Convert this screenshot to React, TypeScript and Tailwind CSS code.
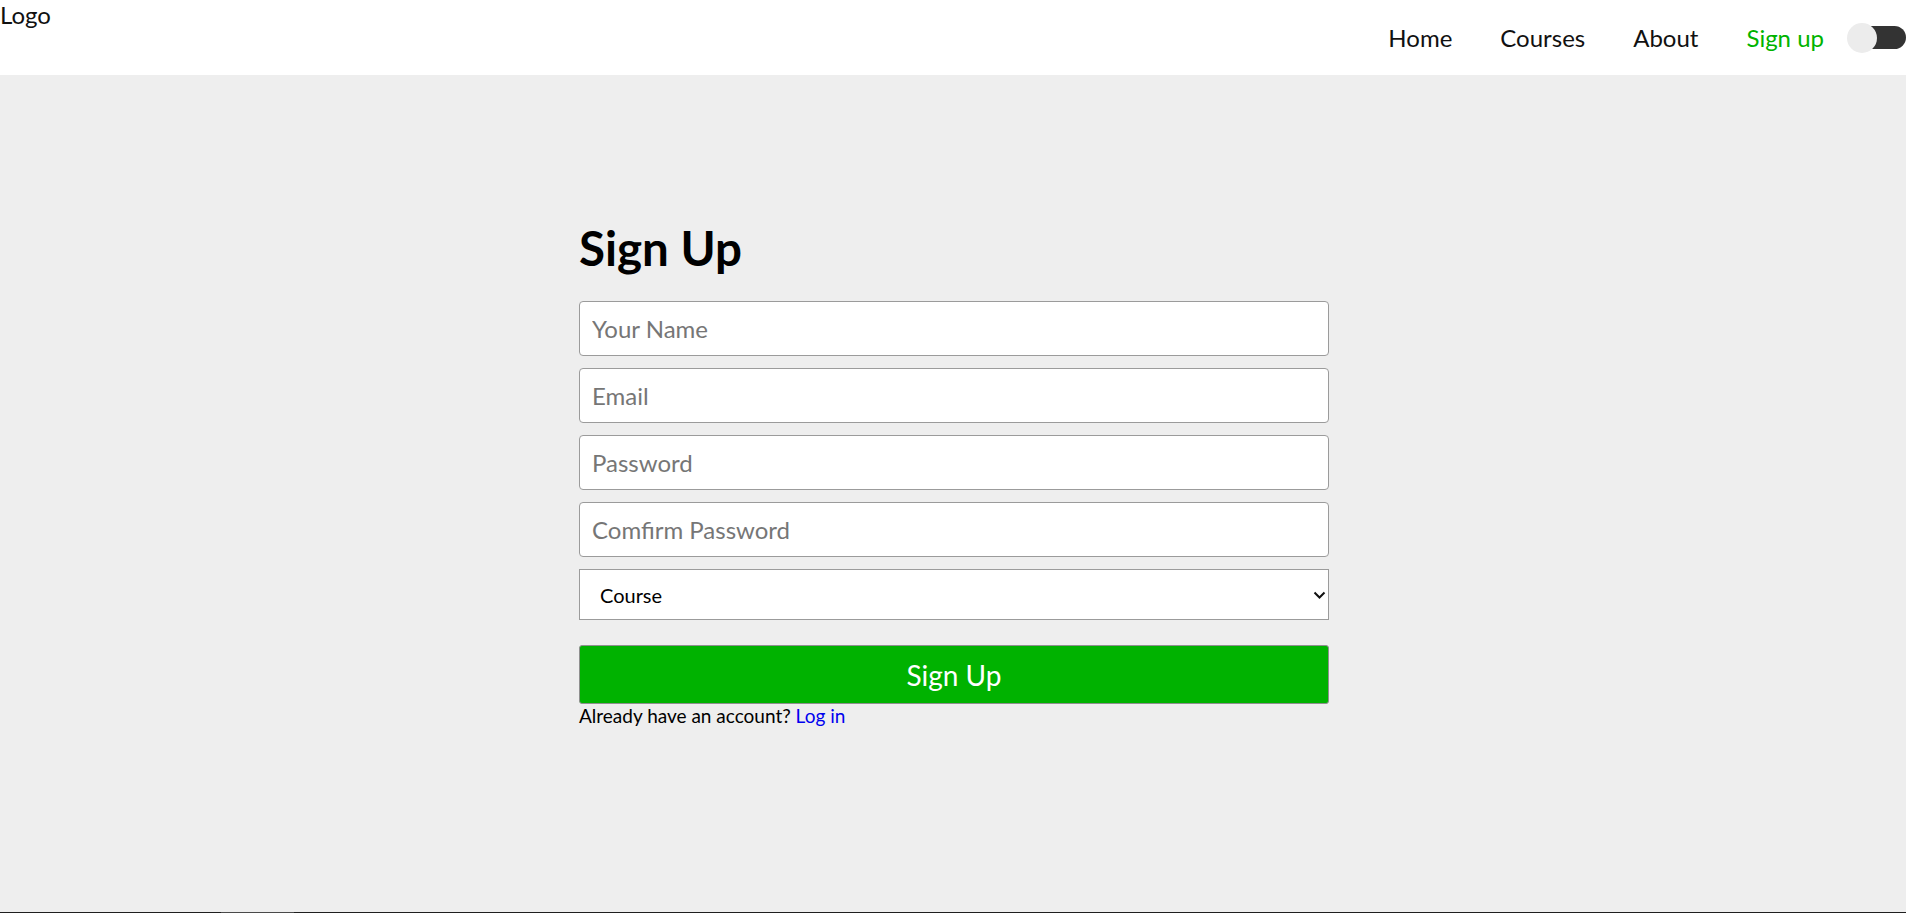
import { useState } from "react";

const font = { fontFamily: "Lato, 'Open Sans', sans-serif" };

function Toggle() {
  const [on, setOn] = useState(false);
  return (
    <button
      onClick={() => setOn(!on)}
      className="relative w-[59px] h-[30px] ml-[23px] shrink-0"
      aria-label="Toggle theme"
    >
      <span className="absolute right-0 top-[3.5px] w-[50px] h-[23px] rounded-full bg-[#333333]" />
      <span className="absolute left-0 top-0 w-[30px] h-[30px] rounded-full bg-[#ececec]" />
    </button>
  );
}

const inputCls =
  "block w-full h-[55px] mb-[12px] px-[12px] bg-white border border-[#9b9b9b] rounded-[4px] text-[24px] text-black placeholder:text-[#767676] outline-none";

export default function App() {
  return (
    <div style={font} className="min-h-screen bg-[#eeeeee] text-black">
      <header className="h-[75px] bg-white flex items-start justify-between">
        <a className="text-[24px] leading-[29px] text-[#111]">Logo</a>
        <nav className="h-full flex items-center">
          <ul className="flex items-center gap-[48px] text-[24px]">
            <li><a className="text-[#111]">Home</a></li>
            <li><a className="text-[#111]">Courses</a></li>
            <li><a className="text-[#111]">About</a></li>
            <li><a className="text-[#00b300]">Sign up</a></li>
          </ul>
          <Toggle />
        </nav>
      </header>

      <main className="h-[837px] flex justify-center pl-[2px]">
        <form className="w-[750px] pt-[144px]" onSubmit={(e) => e.preventDefault()}>
          <h1 className="text-[47.5px] leading-[58px] font-bold mb-[24px]">Sign Up</h1>
          <input className={inputCls} placeholder="Your Name" />
          <input className={inputCls} placeholder="Email" />
          <input className={inputCls} type="password" placeholder="Password" />
          <input className={inputCls} type="password" placeholder="Comfirm Password" />
          <div className="relative">
            <select className="block w-full h-[51px] pl-[20px] pr-[40px] bg-white border border-[#9b9b9b] text-[20px] text-black appearance-none outline-none">
              <option>Course</option>
              <option>Web Development</option>
              <option>Data Science</option>
            </select>
            <svg
              className="absolute right-[3px] top-[22px] w-[13px] h-[9px] pointer-events-none"
              viewBox="0 0 13 9"
              fill="none"
              stroke="#111"
              strokeWidth="2"
            >
              <path d="M1.5 1.5 L6.5 6.5 L11.5 1.5" />
            </svg>
          </div>
          <button
            type="submit"
            className="block w-full h-[59px] mt-[25px] bg-[#00b200] border border-[#8f8f8f] rounded-[3px] text-white text-[28px] leading-[34px] pt-[1px]"
          >
            Sign Up
          </button>
          <p className="text-[19px] leading-[23px]">
            Already have an account? <a className="text-[#0000ee]">Log in</a>
          </p>
        </form>
      </main>
      <footer className="h-[40px] bg-[#1f1f1f] flex">
        <div className="ml-[221px] w-[73px] h-[1px] bg-[#4a4a4a]" />
      </footer>
    </div>
  );
}
